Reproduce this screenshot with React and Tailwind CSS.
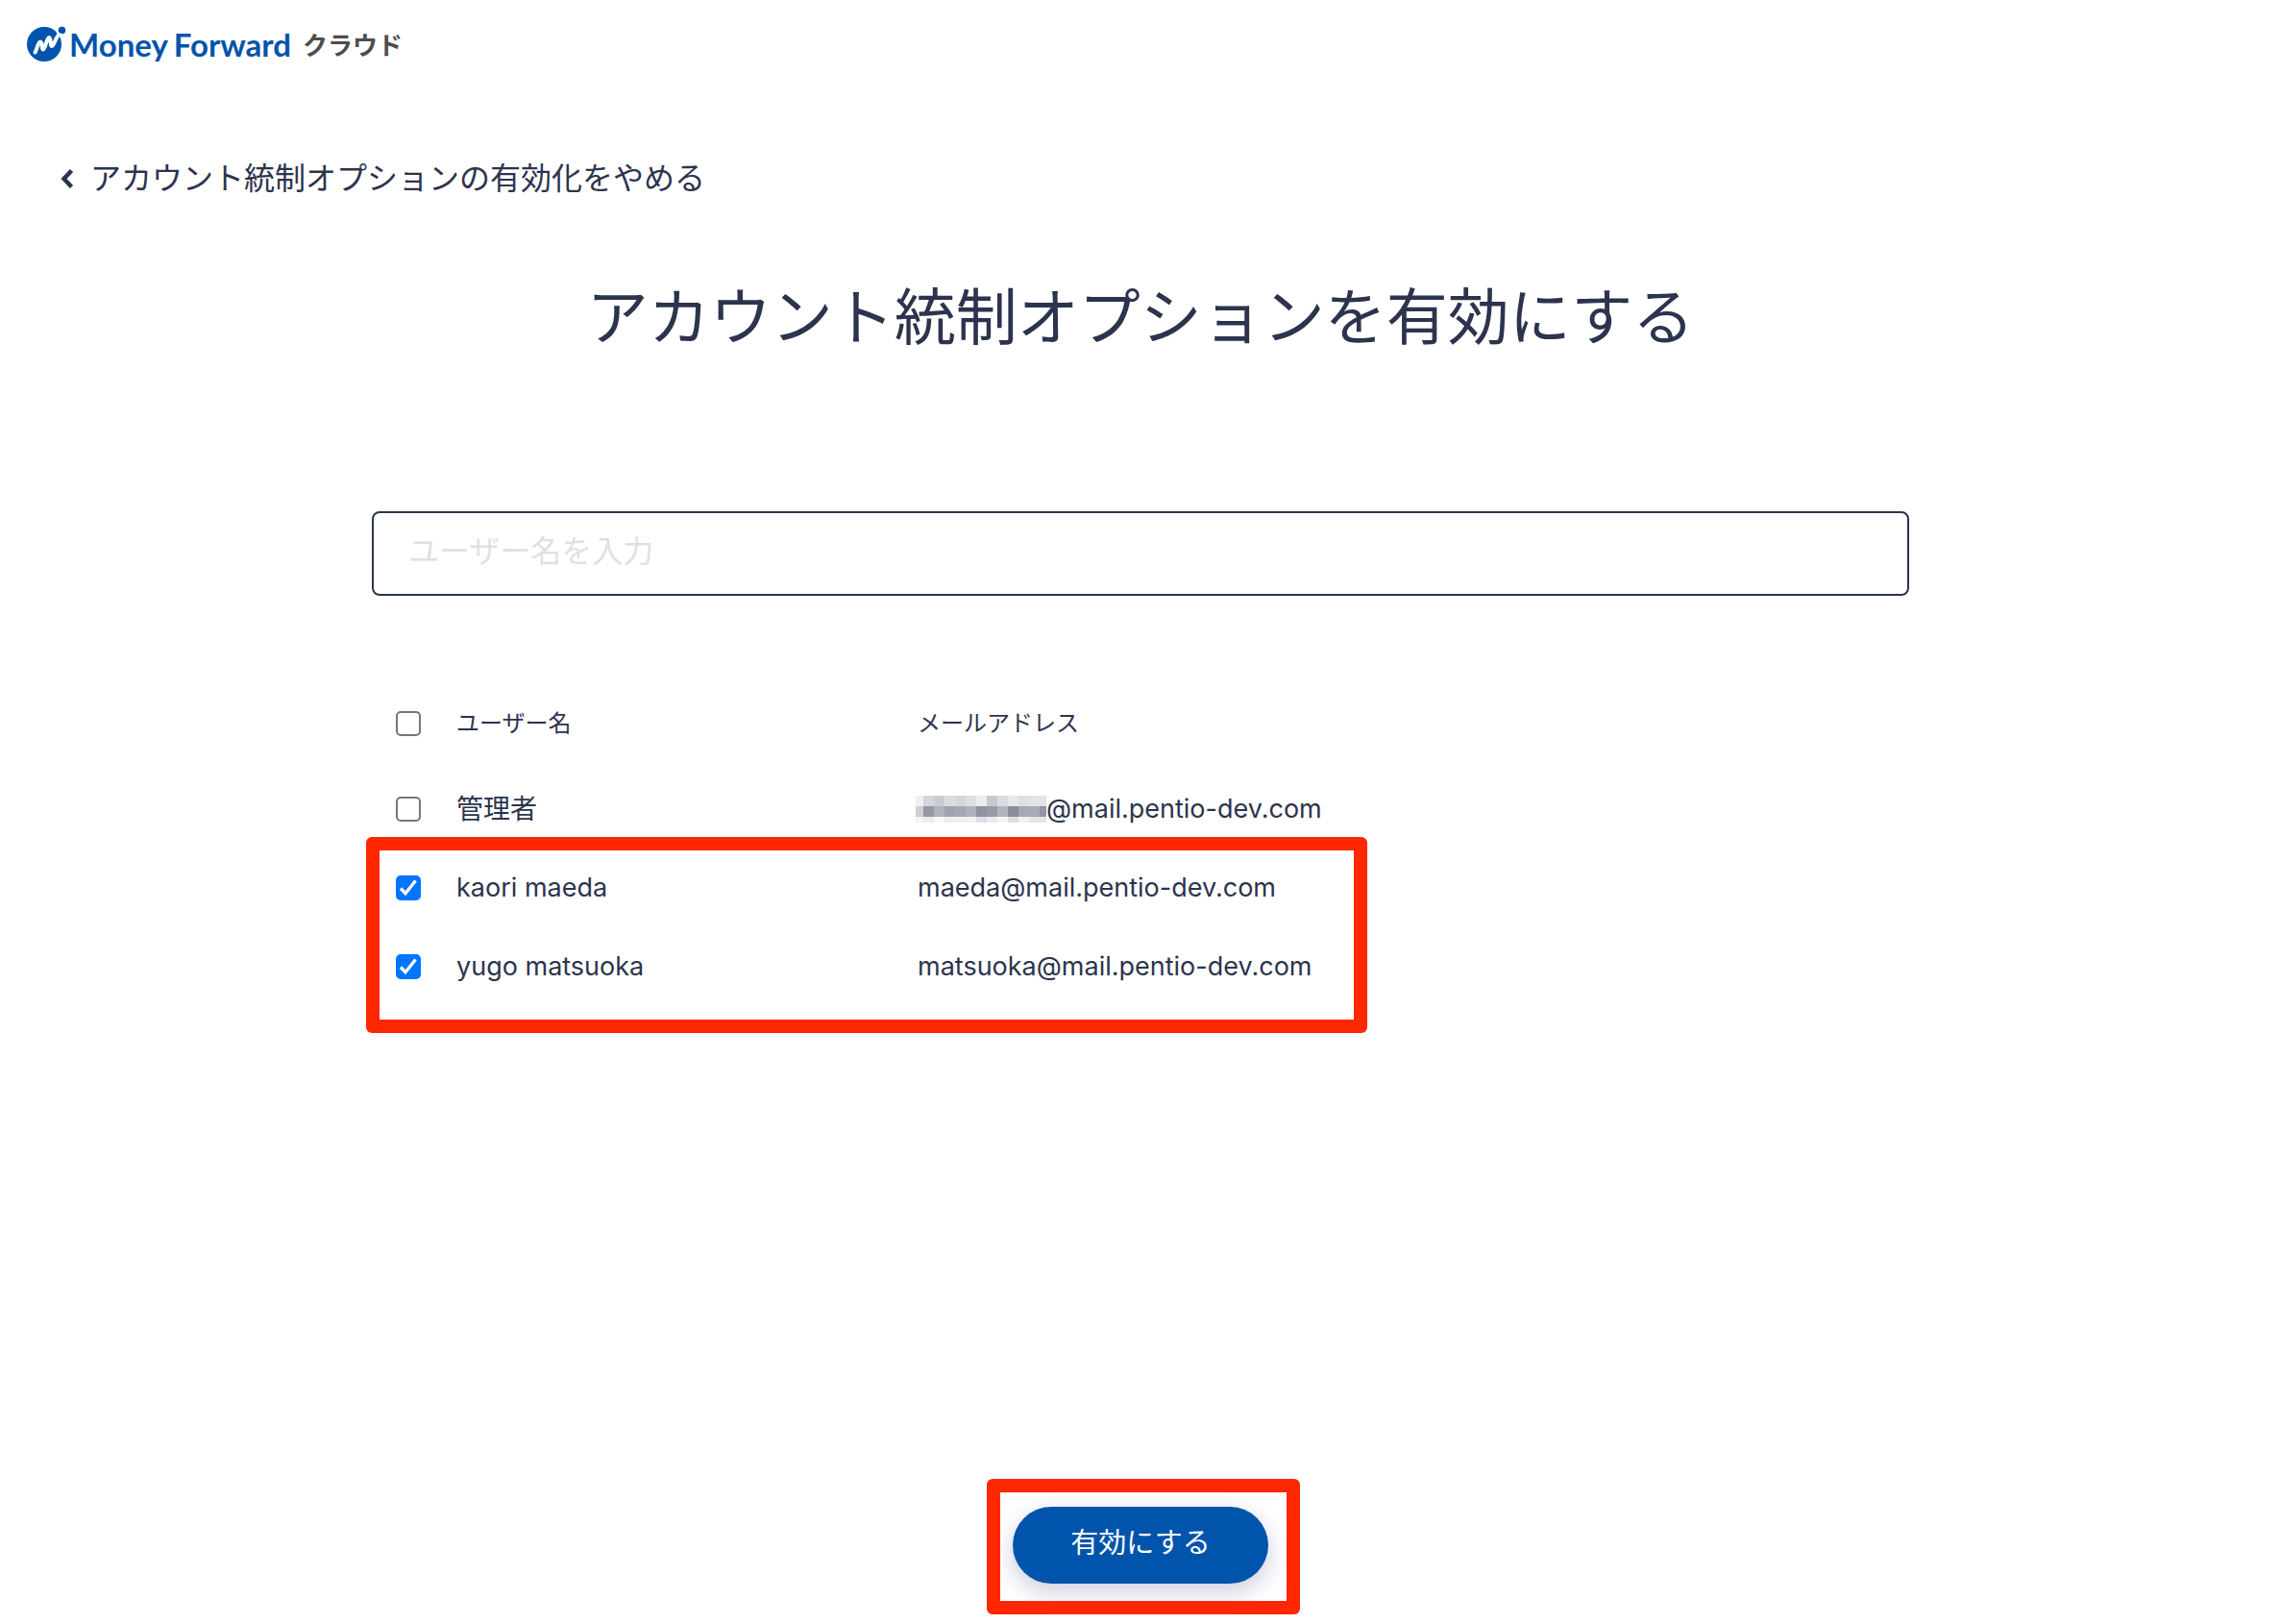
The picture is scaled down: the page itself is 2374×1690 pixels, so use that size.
import { useState } from "react";

const USERS = [
  { id: 1, name: "管理者", email: "@mail.pentio-dev.com", lang: "ja", masked: true },
  { id: 2, name: "kaori maeda", email: "maeda@mail.pentio-dev.com", lang: "en" },
  { id: 3, name: "yugo matsuoka", email: "matsuoka@mail.pentio-dev.com", lang: "en" },
];

// Mosaic cells, one array per row of blocks
const MOSAIC = [
  ["#efeff1", "#d6d7db", "#cbccd2", "#dcdde0", "#d5d6da", "#dedfe3", "#ebecee", "#c9cad0", "#dadbdf", "#e8e8eb", "#dfe0e4", "#e4e4e8", "#e4e4e8"],
  ["#cfd0d6", "#9597a4", "#b1b3bb", "#a0a2ae", "#a5a7b2", "#afb1ba", "#9092a0", "#999ba8", "#b3b5bd", "#8a8d9a", "#a6a8b2", "#a8aab4", "#9294a2"],
  ["#f4f4f6", "#ececef", "#f7f7f8", "#efeff2", "#f0f0f2", "#f1f1f4", "#dedfe5", "#ebebee", "#f4f4f6", "#dddee4", "#f1f1f3", "#e5e5ea", "#e5e5ea"],
];

const Mosaic = () => (
  <svg
    className="-ml-0.5 h-7 w-[136px] shrink-0"
    viewBox="0 0 136 28"
    shapeRendering="crispEdges"
    aria-hidden="true"
  >
    {MOSAIC.map((row, y) =>
      row.map((fill, x) => (
        <rect
          key={`${x}-${y}`}
          x={x === 0 ? 0 : x * 11 - 3}
          y={y * 11}
          width={x === 0 ? 8 : 11}
          height={y === 2 ? 6 : 11}
          fill={fill}
        />
      ))
    )}
  </svg>
);

const Logo = () => (
  <a href="#" className="flex items-center text-[#0054ac]">
    <svg className="h-10 w-11 shrink-0" viewBox="0 0 44 40" aria-hidden="true">
      <circle cx="18" cy="20" r="18" fill="#0054ac" />
      <circle cx="36.5" cy="5.5" r="6.2" fill="#fff" />
      <circle cx="36.5" cy="5.5" r="3.8" fill="#0054ac" />
      <path
        d="M8.5 28.5 C10.5 26 11.500 17.500 14 17.500 C16.500 17.500 15 26 17 25.500 C19.500 24.500 20.500 13 23 13 C25.500 13 24 22.500 26 22 C28.500 21.500 29.500 13 33.500 10"
        fill="none"
        stroke="#fff"
        strokeWidth="4"
        strokeLinecap="round"
      />
    </svg>
    <span className="flex gap-1.5 font-['Lato'] text-[33px] leading-10 font-bold">
      <span>Money</span>
      <span>Forward</span>
    </span>
    <span className="ml-3 pt-1 text-[26px] leading-9 font-bold text-[#4d4d4d]">クラウド</span>
  </a>
);

// Red frame laid over the parts the reader should look at
const Highlight = ({ className }) => (
  <div
    className={`pointer-events-none absolute rounded-md border-14 border-[#ff2700] ${className}`}
  />
);

const Checkbox = (props) => (
  <span className="grid size-[26px]">
    <input
      type="checkbox"
      className="peer col-start-1 row-start-1 size-[26px] appearance-none rounded-[5px] border-2 border-[#767676] bg-white checked:border-[#0075ff] checked:bg-[#0075ff]"
      {...props}
    />
    <svg
      className="pointer-events-none invisible col-start-1 row-start-1 size-[26px] peer-checked:visible"
      viewBox="0 0 26 26"
      aria-hidden="true"
    >
      <path d="M5 13.5 L10 18.7 L20.5 5.500" fill="none" stroke="#fff" strokeWidth="3.4" />
    </svg>
  </span>
);

const App = () => {
  const [selected, setSelected] = useState([2, 3]);
  const [query, setQuery] = useState("");

  const toggle = (id) =>
    setSelected((prev) =>
      prev.includes(id) ? prev.filter((item) => item !== id) : [...prev, id]
    );

  const toggleAll = () =>
    setSelected((prev) => (prev.length === USERS.length ? [] : USERS.map((u) => u.id)));

  const users = USERS.filter((u) => u.name.includes(query));

  return (
    <div className="bg-white font-['Inter','Noto_Sans_CJK_JP',sans-serif] text-[#2c344d]">
      <header className="flex px-7 pt-[26px]">
        <Logo />
      </header>

      <main className="pb-[42px]">
        <a href="#" className="mt-24 ml-[62px] inline-flex items-center gap-4 text-[32px] leading-12">
          <svg className="h-6 w-4" viewBox="0 0 16 24" aria-hidden="true">
            <path d="M12.5 3.5 L4.5 12 L12.5 20.5" fill="none" stroke="currentColor" strokeWidth="4.5" />
          </svg>
          アカウント統制オプションの有効化をやめる
        </a>

        <h1 className="mt-[72px] text-center text-[64px] leading-24">
          アカウント統制オプションを有効にする
        </h1>

        <div className="mx-auto mt-[154px] max-w-[1600px]">
          <input
            type="text"
            aria-label="ユーザー名"
            placeholder="ユーザー名を入力"
            value={query}
            onChange={(e) => setQuery(e.target.value)}
            className="block h-[88px] w-full rounded-lg border-2 border-[#2c344d] px-9 pb-1.5 text-[32px] placeholder:text-[#dfe0e5]"
          />

          {/* User list */}
          <div className="relative mt-[85px]">
            <table className="w-full table-fixed text-left text-[27px]">
              <thead>
                <tr className="h-24 text-[24px]">
                  <th className="w-[88px] pl-[25px]">
                    <Checkbox
                      aria-label="すべて選択"
                      checked={selected.length === USERS.length}
                      onChange={toggleAll}
                    />
                  </th>
                  <th className="w-[480px] font-normal">ユーザー名</th>
                  <th className="font-normal">メールアドレス</th>
                </tr>
              </thead>
              <tbody>
                {users.map((user) => (
                  <tr key={user.id} className="h-[82px]">
                    <td className="pl-[25px]">
                      <Checkbox
                        id={`user-${user.id}`}
                        checked={selected.includes(user.id)}
                        onChange={() => toggle(user.id)}
                      />
                    </td>
                    <td className={user.lang === "ja" ? "text-[28px]" : ""}>
                      <label htmlFor={`user-${user.id}`}>{user.name}</label>
                    </td>
                    <td>
                      <span className="flex items-center">
                        {user.masked && <Mosaic />}
                        {user.email}
                      </span>
                    </td>
                  </tr>
                ))}
              </tbody>
            </table>
            <Highlight className="top-[166px] -left-1.5 h-[204px] w-[1042px]" />
          </div>
        </div>

        {/* Submit */}
        <div className="relative mx-auto mt-[521px] w-[266px]">
          <button
            type="button"
            className="block h-20 w-full rounded-full bg-[#0054ac] pb-1 text-[29px] text-white shadow-[0_8px_24px_rgba(44,52,120,0.25)]"
          >
            有効にする
          </button>
          <Highlight className="-top-[29px] -left-[27px] h-[141px] w-[326px]" />
        </div>
      </main>
    </div>
  );
};

export default App;
